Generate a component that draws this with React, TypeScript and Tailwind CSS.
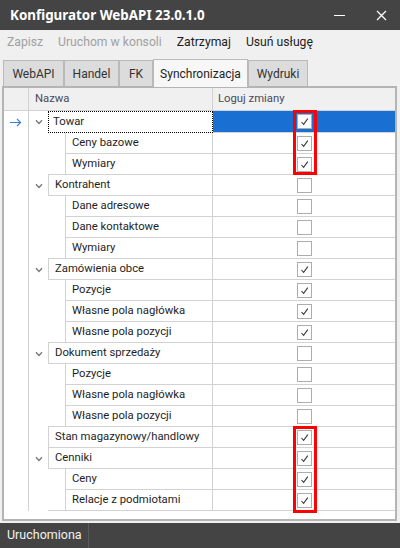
import React from "react";

type Node = { name: string; level: 1 | 2; open?: boolean; log: boolean };

const rows: Node[] = [
  { name: "Towar", level: 1, open: true, log: true },
  { name: "Ceny bazowe", level: 2, log: true },
  { name: "Wymiary", level: 2, log: true },
  { name: "Kontrahent", level: 1, open: true, log: false },
  { name: "Dane adresowe", level: 2, log: false },
  { name: "Dane kontaktowe", level: 2, log: false },
  { name: "Wymiary", level: 2, log: false },
  { name: "Zamówienia obce", level: 1, open: true, log: true },
  { name: "Pozycje", level: 2, log: true },
  { name: "Własne pola nagłówka", level: 2, log: true },
  { name: "Własne pola pozycji", level: 2, log: true },
  { name: "Dokument sprzedaży", level: 1, open: true, log: false },
  { name: "Pozycje", level: 2, log: false },
  { name: "Własne pola nagłówka", level: 2, log: false },
  { name: "Własne pola pozycji", level: 2, log: false },
  { name: "Stan magazynowy/handlowy", level: 1, log: true },
  { name: "Cenniki", level: 1, open: true, log: true },
  { name: "Ceny", level: 2, log: true },
  { name: "Relacje z podmiotami", level: 2, log: true },
];

const tabs = [
  { label: "WebAPI", w: "w-[61px]" },
  { label: "Handel", w: "w-[55px]" },
  { label: "FK", w: "w-[34px]" },
  { label: "Synchronizacja", w: "w-[95px]", active: true },
  { label: "Wydruki", w: "w-[60px]" },
];

function Chevron() {
  return (
    <svg width="8" height="6" viewBox="0 0 8 6">
      <path d="M1 1.2 L4 4.4 L7 1.2" fill="none" stroke="#7a7a7a" strokeWidth="1.4" />
    </svg>
  );
}

function RowArrow() {
  return (
    <svg width="13" height="9" viewBox="0 0 13 9">
      <path d="M1 4.5 H11.5 M8 1 L11.5 4.5 L8 8" fill="none" stroke="#3a7bd5" strokeWidth="1.1" />
    </svg>
  );
}

function Check({ on }: { on: boolean }) {
  return (
    <div className="w-[15px] h-[15px] border border-[#adadad] bg-white flex items-center justify-center">
      {on && (
        <svg width="13" height="13" viewBox="0 0 13 13">
          <path d="M3.5 7 L5.6 9.3 L9.8 3.6" fill="none" stroke="#3a3a3a" strokeWidth="1.1" />
        </svg>
      )}
    </div>
  );
}

export default function App() {
  return (
    <div
      className="w-[400px] h-[548px] bg-[#f0f0f0] flex flex-col overflow-hidden text-[#1e1e1e] whitespace-nowrap"
      style={{ fontFamily: 'Roboto, "Noto Sans", sans-serif' }}
    >
      {/* title bar */}
      <div
        className="h-[30px] shrink-0 bg-[#444444] flex items-center pl-[10px] text-white"
        style={{ fontFamily: '"Noto Sans", sans-serif' }}
      >
        <span className="font-bold text-[13.4px]">Konfigurator WebAPI 23.0.1.0</span>
        <span className="ml-auto w-[11px] h-[1px] bg-white mr-[31px]" />
        <svg width="11" height="11" viewBox="0 0 11 11" className="mr-[13px]">
          <path d="M1 1 L10 10 M10 1 L1 10" stroke="#fff" strokeWidth="1.3" />
        </svg>
      </div>

      {/* menu */}
      <div className="h-[25px] shrink-0 flex items-center gap-[15px] pl-[7px] text-[12.2px]">
        <span className="text-[#a0a0a0]">Zapisz</span>
        <span className="text-[#a0a0a0]">Uruchom w konsoli</span>
        <span>Zatrzymaj</span>
        <span>Usuń usługę</span>
      </div>

      {/* tabs */}
      <div className="h-[31px] shrink-0 flex items-end pl-[3px] text-[12px]">
        {tabs.map((t) =>
          t.active ? (
            <div
              key={t.label}
              className={`${t.w} h-[28px] -mb-[1px] bg-[#f7f7f7] border border-b-0 border-[#b9b9b9] flex items-center justify-center relative z-10`}
            >
              {t.label}
            </div>
          ) : (
            <div
              key={t.label}
              className={`${t.w} h-[26px] bg-[#dcdcdc] border border-b-0 border-[#b9b9b9] flex items-center justify-center text-[#333]`}
            >
              {t.label}
            </div>
          )
        )}
      </div>

      {/* grid */}
      <div className="ml-[2px] w-[395px] h-[435px] shrink-0 border-2 border-[#b4b4b4] bg-white text-[11.3px]">
        <div className="flex h-[23px] bg-[#f0f0f0] border-b border-[#d2d2d2] text-[#4a4a5a]">
          <div className="w-[25px] border-r border-[#d2d2d2]" />
          <div className="w-[184px] border-r border-[#d2d2d2] flex items-center pl-[6px]">Nazwa</div>
          <div className="flex-1 flex items-center pl-[5px]">Loguj zmiany</div>
        </div>

        <div className="relative">
          {rows.map((r, i) => {
            const focused = i === 0;
            const nextTop = i === rows.length - 1 || rows[i + 1].level === 1;
            return (
              <div key={i} className={`flex ${focused ? "h-[22px]" : "h-[21px]"}`}>
                <div className="w-[25px] border-r border-[#d2d2d2] flex items-center justify-center pr-[2px]">
                  {focused && <RowArrow />}
                </div>
                <div className="w-[184px] flex">
                  <div className="w-[19px] flex items-center justify-center">
                    {r.open && <Chevron />}
                  </div>
                  {r.level === 2 && (
                    <div className={`w-[17px] ${nextTop ? "border-b border-[#d2d2d2]" : ""}`} />
                  )}
                  {focused ? (
                    <div className="flex-1 border border-dotted border-black flex items-center pl-[4px]">
                      {r.name}
                    </div>
                  ) : (
                    <div className="flex-1 border-l border-b border-r border-[#d2d2d2] flex items-center pl-[6px]">
                      {r.name}
                    </div>
                  )}
                </div>
                <div
                  className={`flex-1 border-b border-[#d2d2d2] flex items-center justify-center ${
                    focused ? "bg-[#1a6fd2]" : ""
                  }`}
                >
                  <Check on={r.log} />
                </div>
              </div>
            );
          })}

          {/* highlighted groups */}
          <div className="absolute left-[289px] top-[-1px] w-[24px] h-[65px] border-[3px] border-[#ff0000]" />
          <div className="absolute left-[289px] top-[315px] w-[24px] h-[87px] border-[3px] border-[#ff0000]" />
        </div>
      </div>

      {/* status bar */}
      <div className="mt-[2px] h-[25px] shrink-0 bg-[#444444] flex text-[12.5px] text-[#f2f2f2]">
        <div className="w-[89px] border-r border-[#5a5a5a] flex items-center pl-[7px]">Uruchomiona</div>
      </div>
    </div>
  );
}
